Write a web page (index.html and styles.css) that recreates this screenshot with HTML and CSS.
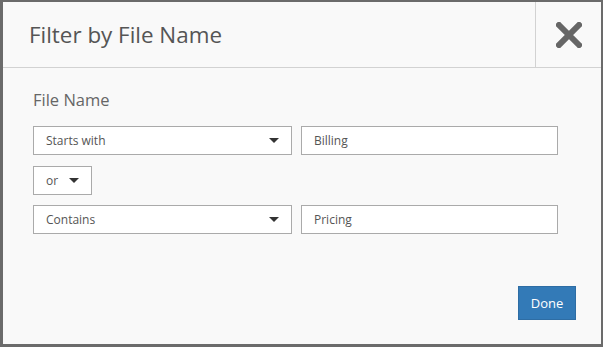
FILE: index.html
```html
<!DOCTYPE html>
<html>
<head>
<meta charset="utf-8">
<link rel="stylesheet" href="styles.css">
</head>
<body>
<div class="modal">
  <div class="header">
    <h1 class="title">Filter by File Name</h1>
    <div class="close">
      <svg width="26" height="26" viewBox="0 0 26 26"><path d="M3 3 L23 23 M23 3 L3 23" stroke="#666" stroke-width="6" stroke-linecap="square"/></svg>
    </div>
  </div>
  <div class="body">
    <div class="label">File Name</div>
    <div class="row">
      <div class="select wide"><span>Starts with</span><i class="caret"></i></div>
      <div class="input">Billing</div>
    </div>
    <div class="row row-or">
      <div class="select small"><span>or</span><i class="caret"></i></div>
    </div>
    <div class="row">
      <div class="select wide"><span>Contains</span><i class="caret"></i></div>
      <div class="input">Pricing</div>
    </div>
  </div>
  <div class="footer">
    <button class="done">Done</button>
  </div>
</div>
</body>
</html>
```
FILE: styles.css
```css
html, body { margin: 0; padding: 0; }
body { width: 603px; height: 347px; background: #6b6b6b; font-family: "Open Sans", "Noto Sans", sans-serif; color: #555; }
.modal {
  box-sizing: border-box;
  width: 603px; height: 347px;
  border-style: solid; border-color: #6b6b6b;
  border-width: 2px 2px 3px 3px;
  background: #f9f9f9;
  display: flex; flex-direction: column;
}
.header { display: flex; height: 65px; border-bottom: 1px solid #d2d2d2; }
.title { flex: 1; margin: 0; padding-left: 26px; font-weight: 400; font-size: 22.4px; line-height: 65px; color: #555; }
.close { width: 65px; border-left: 1px solid #d2d2d2; display: flex; align-items: center; justify-content: center; }
.body { padding: 21px 0 0 30px; }
.label { font-size: 16.5px; line-height: 22px; color: #666; margin-bottom: 15px; }
.row { display: flex; gap: 9px; margin-bottom: 11px; }
.row-or { margin-bottom: 10px; }
.select, .input {
  box-sizing: border-box; height: 29px; background: #fff; border: 1px solid #aaa;
  font-size: 12px; color: #555; display: flex; align-items: center;
}
.select { padding: 0 12px; justify-content: space-between; }
.wide { width: 259px; }
.small { width: 59px; }
.input { width: 257px; padding: 0 12px; }
.caret { display: block; width: 0; height: 0; border-left: 5px solid transparent; border-right: 5px solid transparent; border-top: 5px solid #333; }
.footer { margin-top: auto; display: flex; justify-content: flex-end; padding: 0 25px 24px 0; }
.done { width: 58px; height: 34px; background: #337ab7; border: 1px solid #2e6da4; color: #fff; font-family: inherit; font-size: 13px; padding: 0; }
```
